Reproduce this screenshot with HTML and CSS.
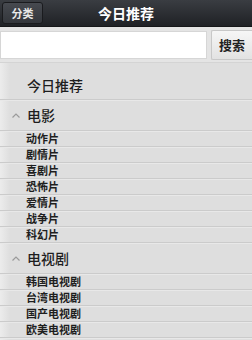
FILE: index.html
```html
<!DOCTYPE html>
<html lang="zh">
<head>
<meta charset="utf-8">
<link rel="stylesheet" href="styles.css">
</head>
<body>
<div class="page">
  <header class="topbar">
    <button class="cat-btn">分类</button>
    <h1 class="title">今日推荐</h1>
  </header>
  <div class="search">
    <input class="search-input" type="text">
    <button class="search-btn">搜索</button>
  </div>
  <ul class="list">
    <li class="row-top">今日推荐</li>
    <li class="row-head"><svg class="chev" width="8" height="5" viewBox="0 0 8 5"><polyline points="0.5,4.5 4,1 7.5,4.5" fill="none" stroke="#9a9a9a" stroke-width="1.2"/></svg>电影</li>
    <li class="row-item">动作片</li>
    <li class="row-item">剧情片</li>
    <li class="row-item">喜剧片</li>
    <li class="row-item">恐怖片</li>
    <li class="row-item">爱情片</li>
    <li class="row-item">战争片</li>
    <li class="row-item">科幻片</li>
    <li class="row-head"><svg class="chev" width="8" height="5" viewBox="0 0 8 5"><polyline points="0.5,4.5 4,1 7.5,4.5" fill="none" stroke="#9a9a9a" stroke-width="1.2"/></svg>电视剧</li>
    <li class="row-item">韩国电视剧</li>
    <li class="row-item">台湾电视剧</li>
    <li class="row-item">国产电视剧</li>
    <li class="row-item">欧美电视剧</li>
  </ul>
</div>
</body>
</html>
```
FILE: styles.css
```css
html, body {
  margin: 0;
  padding: 0;
  background: #dedede;
  font-family: "Noto Sans CJK SC", "Noto Sans", sans-serif;
}
.page {
  width: 252px;
  height: 340px;
  overflow: hidden;
  background: linear-gradient(to right, #ececec 0px, #dedede 10px);
}
.topbar {
  height: 27px;
  background: linear-gradient(#3a3d42, #1f2125);
  display: flex;
  align-items: center;
  position: relative;
  border-bottom: 1px solid #151618;
  box-sizing: border-box;
}
.cat-btn {
  margin-left: 2px;
  width: 41px;
  height: 22px;
  background: linear-gradient(#474a50, #33363b);
  border: 1px solid #1a1b1e;
  border-radius: 3px;
  color: #e8e8e8;
  font-family: inherit;
  font-size: 11px;
  font-weight: 700;
  padding: 0;
  line-height: 20px;
}
.title {
  position: absolute;
  left: 0;
  right: 0;
  top: 0;
  margin: 0;
  text-align: center;
  color: #ffffff;
  font-size: 14px;
  font-weight: 700;
  line-height: 26px;
  pointer-events: none;
}
.search {
  display: flex;
  align-items: center;
  gap: 4px;
  height: 36px;
  background: #e4e4e4;
  border-bottom: 1px solid #d4d4d4;
  box-sizing: border-box;
}
.search-input {
  width: 207px;
  height: 28px;
  box-sizing: border-box;
  border: 1px solid #d6d6d6;
  background: #ffffff;
  margin: 0;
  padding: 0;
}
.search-btn {
  flex: 1;
  height: 30px;
  margin: 0;
  padding: 0;
  border: 1px solid #c8c8c8;
  border-right: none;
  border-radius: 2px 0 0 2px;
  background: linear-gradient(#f6f6f6, #e2e2e2);
  color: #222;
  font-family: inherit;
  font-size: 13px;
  font-weight: 700;
}
.list {
  list-style: none;
  margin: 0;
  padding: 0;
}
.list li {
  box-sizing: border-box;
  border-bottom: 1px solid #cbcbcb;
  box-shadow: 0 1px 0 #e8e8e8;
  color: #1e1e1e;
}
.row-top {
  height: 37px;
  padding: 12px 0 0 27px;
  font-size: 14px;
  font-weight: 500;
  line-height: 20px;
  color: #141414;
}
.row-head {
  height: 31px;
  display: flex;
  align-items: center;
  padding-left: 12px;
  font-size: 14px;
  font-weight: 500;
  color: #141414;
}
.chev {
  margin-right: 7px;
  margin-top: 1px;
}
.row-item {
  height: 16px;
  padding-left: 26px;
  font-size: 11px;
  font-weight: 700;
  line-height: 15px;
  color: #2a2a2a;
}
```
